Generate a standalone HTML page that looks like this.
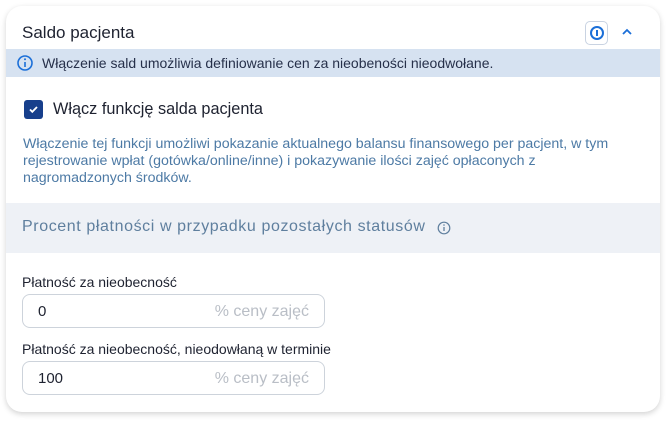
<!DOCTYPE html>
<html><head><meta charset="utf-8"><style>
*{box-sizing:border-box;margin:0;padding:0}
body{width:672px;height:426px;background:#fff;font-family:"Liberation Sans",sans-serif;position:relative;overflow:hidden}
.card{position:absolute;left:6px;top:6px;width:654px;height:406px;border-radius:16px;background:#fff;box-shadow:0 2px 6px rgba(0,0,0,.18);overflow:hidden}
.abs{position:absolute}
.hdr{left:16px;top:17px;font-size:17px;color:#1e2230}
.ibtn{left:579px;top:15px;width:23px;height:24px;border:1px solid #c9d3e2;border-radius:5px}
.band{left:0;top:43px;width:654px;height:28px;background:#d6e2f1}
.band span{position:absolute;left:36px;top:6px;font-size:14px;color:#26304a}
.cb{left:18px;top:94px;width:19px;height:19px;background:#173f8c;border-radius:3px}
.cbl{left:47px;top:94px;font-size:16.3px;color:#1e2230}
.desc{left:17px;top:130px;width:630px;font-size:14.2px;line-height:17px;color:#4d7aa5;white-space:nowrap}
.sec{left:0;top:197px;width:654px;height:50px;background:#eef1f6}
.sec span{position:absolute;left:16px;top:15px;font-size:16px;letter-spacing:.6px;color:#5f7f9e;white-space:nowrap}
.lbl{left:16px;font-size:14px;color:#1e2230}
.inp{left:16px;width:303px;height:34px;border:1px solid #cdd3db;border-radius:8px}
.inp b{position:absolute;left:15px;top:8px;font-weight:normal;font-size:15px;color:#1e2230}
.inp i{position:absolute;right:15px;top:8px;font-style:normal;font-size:16px;color:#b9bec6}
</style></head><body>
<div class="card">
<div class="abs hdr">Saldo pacjenta</div>
<div class="abs ibtn"><svg width="23" height="22" viewBox="0 0 23 22" style="position:absolute;left:0;top:0"><circle cx="11" cy="11" r="6" fill="none" stroke="#1b6fd8" stroke-width="2"/><line x1="11" y1="8" x2="11" y2="14" stroke="#1b6fd8" stroke-width="2"/></svg></div>
<svg class="abs" style="left:615px;top:21px" width="12" height="10" viewBox="0 0 12 10"><path d="M2 7 L6 3 L10 7" fill="none" stroke="#1b6fd8" stroke-width="1.8"/></svg>
<div class="abs band"><svg style="position:absolute;left:10px;top:5px" width="18" height="18" viewBox="0 0 18 18"><circle cx="9" cy="9" r="7" fill="none" stroke="#1b6fd8" stroke-width="1.6"/><line x1="9" y1="8" x2="9" y2="13" stroke="#1b6fd8" stroke-width="1.6"/><circle cx="9" cy="5.3" r="1" fill="#1b6fd8"/></svg><span>Włączenie sald umożliwia definiowanie cen za nieobeności nieodwołane.</span></div>
<div class="abs cb"><svg width="19" height="19" viewBox="0 0 19 19"><path d="M6 9.5 L8.3 11.8 L13 7" fill="none" stroke="#fff" stroke-width="1.8"/></svg></div>
<div class="abs cbl">Włącz funkcję salda pacjenta</div>
<div class="abs desc">Włączenie tej funkcji umożliwi pokazanie aktualnego balansu finansowego per pacjent, w tym<br>rejestrowanie wpłat (gotówka/online/inne) i pokazywanie ilości zajęć opłaconych z<br>nagromadzonych środków.</div>
<div class="abs sec"><span>Procent płatności w przypadku pozostałych statusów</span><svg style="position:absolute;left:431px;top:18px" width="14" height="14" viewBox="0 0 14 14"><circle cx="7" cy="7" r="5.8" fill="none" stroke="#5f7f9e" stroke-width="1.2"/><line x1="7" y1="6" x2="7" y2="10" stroke="#5f7f9e" stroke-width="1.3"/><circle cx="7" cy="4" r=".8" fill="#5f7f9e"/></svg></div>
<div class="abs lbl" style="top:268px">Płatność za nieobecność</div>
<div class="abs inp" style="top:288px"><b>0</b><i>% ceny zajęć</i></div>
<div class="abs lbl" style="top:335px">Płatność za nieobecność, nieodowłaną w terminie</div>
<div class="abs inp" style="top:355px"><b>100</b><i>% ceny zajęć</i></div>
</div>
</body></html>
